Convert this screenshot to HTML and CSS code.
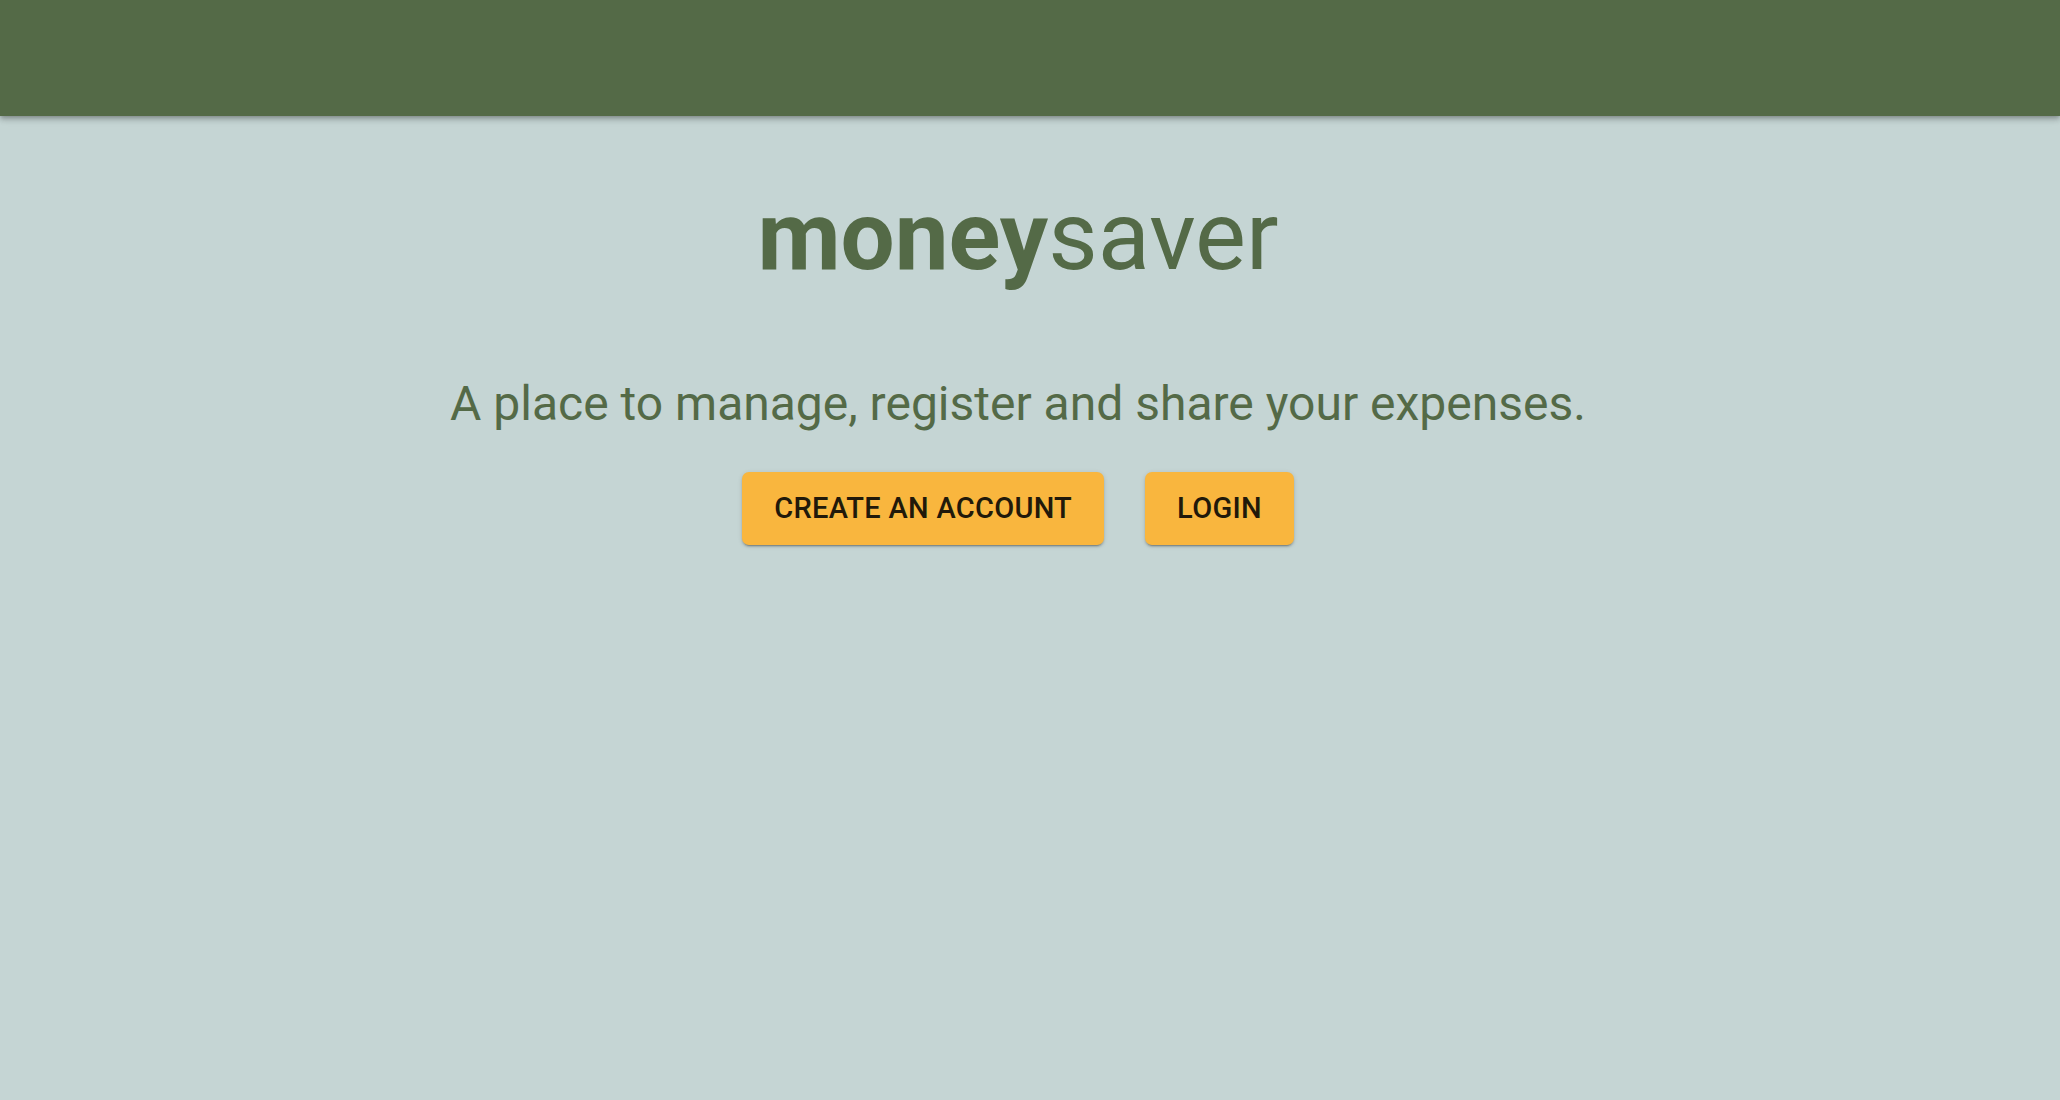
FILE: index.html
```html
<!DOCTYPE html>
<html lang="en">
<head>
<meta charset="utf-8">
<title>moneysaver</title>
<link rel="stylesheet" href="styles.css">
</head>
<body>
<header class="app-bar"></header>
<main class="hero">
  <h1 class="logo"><span class="logo-bold">money</span><span class="logo-light">saver</span></h1>
  <p class="tagline">A place to manage, register and share your expenses.</p>
  <div class="actions">
    <button class="btn">Create an account</button>
    <button class="btn">Login</button>
  </div>
</main>
</body>
</html>
```
FILE: styles.css
```css
html, body {
  margin: 0;
  padding: 0;
  height: 100%;
}
body {
  background: #c5d5d4;
  font-family: Roboto, "Noto Sans", sans-serif;
  color: #546a47;
}
.app-bar {
  height: 116px;
  background: #546a47;
  box-shadow: 0 2px 4px -1px rgba(0,0,0,0.2), 0 4px 5px 0 rgba(0,0,0,0.14), 0 1px 10px 0 rgba(0,0,0,0.12);
  position: relative;
  z-index: 1;
}
.hero {
  display: flex;
  flex-direction: column;
  align-items: center;
  padding: 0 24px 0 0;
}
.logo {
  margin: 64px 0 0;
  font-size: 96px;
  line-height: 112px;
  font-weight: 400;
}
.logo-bold {
  font-weight: 700;
}
.tagline {
  margin: 84px 0 0;
  font-size: 48px;
  line-height: 56px;
  font-weight: 400;
}
.actions {
  display: flex;
  gap: 41px;
  margin-top: 40px;
}
.btn {
  font-family: Roboto, "Noto Sans", sans-serif;
  font-size: 29px;
  font-weight: 500;
  letter-spacing: 0.01em;
  text-transform: uppercase;
  color: #21190a;
  background: #f9b63e;
  border: none;
  border-radius: 7px;
  padding: 10px 32px;
  line-height: 53px;
  box-shadow: 0 3px 1px -2px rgba(0,0,0,0.2), 0 2px 2px 0 rgba(0,0,0,0.14), 0 1px 5px 0 rgba(0,0,0,0.12);
  cursor: pointer;
}
```
